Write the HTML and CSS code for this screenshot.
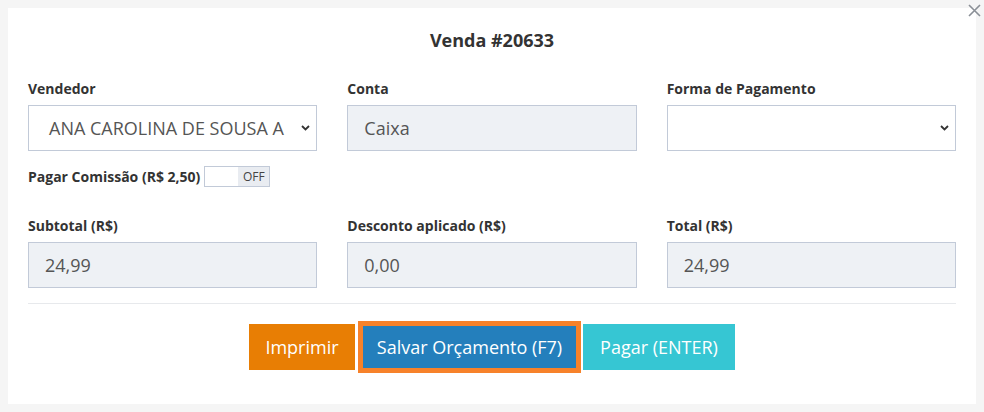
FILE: index.html
```html
<!DOCTYPE html>
<html lang="pt-BR">
<head>
    <meta charset="utf-8">
    <title>Venda #20633</title>
    <link rel="stylesheet" href="styles.css">
</head>
<body>
    <div class="modal">
        <span class="close">
            <svg width="13" height="13" viewBox="0 0 13 13"><path d="M1 1L12 12M12 1L1 12" stroke="#8a8f96" stroke-width="1.6" fill="none"/></svg>
        </span>
        <h4 class="title">Venda #20633</h4>

        <div class="row">
            <div class="col">
                <label>Vendedor</label>
                <div class="field select">
                    <span class="val">ANA CAROLINA DE SOUSA A</span>
                    <svg class="chev" width="9" height="6" viewBox="0 0 9 6"><path d="M1 1L4.5 4.5L8 1" stroke="#333" stroke-width="1.8" fill="none"/></svg>
                </div>
            </div>
            <div class="col">
                <label>Conta</label>
                <div class="field disabled"><span class="val">Caixa</span></div>
            </div>
            <div class="col">
                <label>Forma de Pagamento</label>
                <div class="field select">
                    <span class="val"></span>
                    <svg class="chev" width="9" height="6" viewBox="0 0 9 6"><path d="M1 1L4.5 4.5L8 1" stroke="#333" stroke-width="1.8" fill="none"/></svg>
                </div>
            </div>
        </div>

        <div class="comissao">
            <label>Pagar Comissão (R$ 2,50)</label>
            <div class="switch"><span class="on"></span><span class="off">OFF</span></div>
        </div>

        <div class="row">
            <div class="col">
                <label>Subtotal (R$)</label>
                <div class="field disabled"><span class="val">24,99</span></div>
            </div>
            <div class="col">
                <label>Desconto aplicado (R$)</label>
                <div class="field disabled"><span class="val">0,00</span></div>
            </div>
            <div class="col">
                <label>Total (R$)</label>
                <div class="field disabled"><span class="val">24,99</span></div>
            </div>
        </div>

        <hr>

        <div class="actions">
            <button type="button" class="btn orange">Imprimir</button>
            <button type="button" class="btn blue">Salvar Orçamento (F7)</button>
            <button type="button" class="btn cyan">Pagar (ENTER)</button>
        </div>
    </div>
</body>
</html>
```

FILE: styles.css
```css
* {
    margin: 0;
    padding: 0;
    box-sizing: border-box;
}
body {
    background: #f5f5f5;
    font-family: "Open Sans", "Liberation Sans", sans-serif;
    color: #333;
}
.modal {
    position: relative;
    margin: 8px;
    width: 968px;
    height: 396px;
    background: #fff;
    padding: 20px 20px 0;
}
.close {
    position: absolute;
    top: -4px;
    right: -5px;
    width: 13px;
    height: 13px;
    display: block;
}
.close svg {
    display: block;
}
.title {
    font-size: 18px;
    font-weight: 700;
    text-align: center;
    line-height: 24px;
    height: 24px;
}
.row {
    display: grid;
    grid-template-columns: 1fr 1fr 1fr;
    column-gap: 30px;
    margin-top: 28px;
}
.row + .comissao + .row {
    margin-top: 30px;
}
label {
    display: block;
    font-size: 14px;
    font-weight: 700;
    line-height: 18px;
    height: 18px;
}
.field {
    margin-top: 7px;
    height: 46px;
    border: 1px solid #c2cad8;
    background: #fff;
    display: flex;
    align-items: center;
    padding: 0 10px 0 16px;
    font-size: 18px;
    color: #555;
}
.field .val {
    flex: 1;
    white-space: nowrap;
}
.field.disabled {
    background: #eef1f5;
}
.field.select {
    padding: 0 6px 0 20px;
}
.chev {
    margin-left: auto;
    flex: none;
}
.comissao {
    display: flex;
    align-items: center;
    margin-top: 15px;
    height: 21px;
}
.comissao label {
    margin-right: 4px;
}
.switch {
    display: flex;
    width: 66px;
    height: 21px;
    border: 1px solid #c2cad8;
}
.switch .on {
    width: 33px;
    background: #fff;
}
.switch .off {
    flex: 1;
    background: #e9ecf1;
    font-size: 12px;
    line-height: 19px;
    text-align: center;
    color: #444;
}
hr {
    border: 0;
    border-top: 1px solid #e7e9ec;
    margin-top: 15px;
}
.actions {
    display: flex;
    justify-content: center;
    align-items: center;
    margin-top: 20px;
    height: 46px;
}
.btn {
    height: 46px;
    border: 0;
    font-family: "Open Sans", "Liberation Sans", sans-serif;
    font-size: 18px;
    color: #fff;
    padding: 0;
    cursor: pointer;
}
.btn.orange {
    background: #e87e04;
    width: 106px;
    margin-right: 3px;
}
.btn.blue {
    background: #247fbc;
    width: 223px;
    height: 52px;
    border: 5px solid #f7822a;
    margin-right: 2px;
}
.btn.cyan {
    background: #36c6d3;
    width: 152px;
}
```
